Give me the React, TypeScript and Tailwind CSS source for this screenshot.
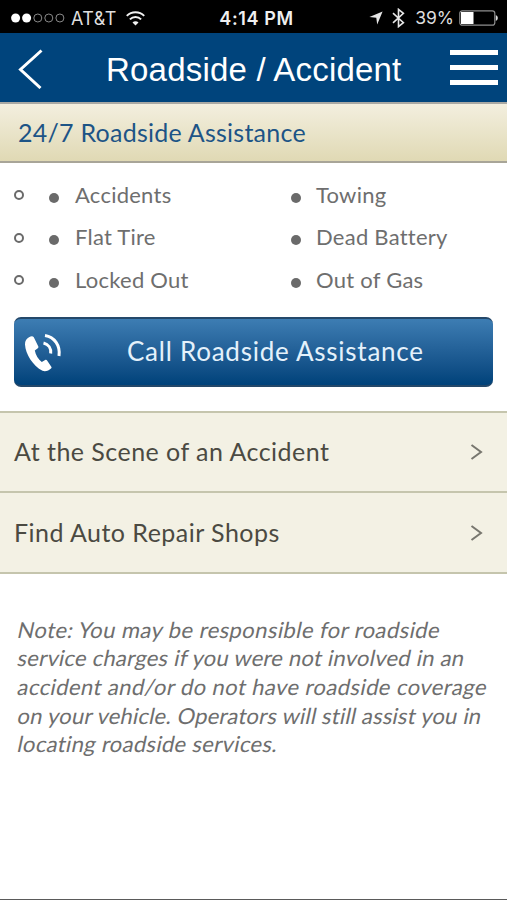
import { type FC } from "react";

const SERVICES = [
    ["Accidents", "Towing"],
    ["Flat Tire", "Dead Battery"],
    ["Locked Out", "Out of Gas"],
];

const LINKS = ["At the Scene of an Accident", "Find Auto Repair Shops"];

const NOTE = [
    { text: "Note: You may be responsible for roadside", className: "tracking-[0.42px]" },
    { text: "service charges if you were not involved in an", className: "tracking-[0.23px]" },
    { text: "accident and/or do not have roadside coverage", className: "tracking-[0.41px]" },
    { text: "on your vehicle. Operators will still assist you in", className: "tracking-[0.2px]" },
    { text: "locating roadside services.", className: "tracking-[0.32px]" },
];

const StatusBar: FC = () => (
    <div className="flex h-[33px] shrink-0 items-center bg-black pl-[11px] pr-[9px] pt-[3px] font-['Inter',sans-serif] text-white">
        <div className="flex flex-1 items-center">
            <svg width="54" height="10" viewBox="0 0 54 10">
                <circle cx="4.6" cy="5" r="4.5" fill="#fff" />
                <circle cx="15.6" cy="5" r="4.5" fill="#fff" />
                <circle cx="26.8" cy="5" r="4" fill="none" stroke="#8a8a8a" />
                <circle cx="37.8" cy="5" r="4" fill="none" stroke="#8a8a8a" />
                <circle cx="48.9" cy="5" r="4" fill="none" stroke="#8a8a8a" />
            </svg>
            <span className="ml-[6px] w-[46px] whitespace-nowrap text-[18px] tracking-[0.4px] text-[#dedede]">AT&amp;T</span>
            <svg className="ml-[9px]" width="19" height="15" viewBox="0 0 19 15" fill="none" stroke="#f2f2f2" strokeWidth="2">
                <path d="M0.8 4.9a12.3 12.3 0 0 1 17.4 0" />
                <path d="M3.9 8.4a7.9 7.9 0 0 1 11.2 0" />
                <path d="M9.5 14.6L6.5 11.4a4.2 4.2 0 0 1 6 0z" fill="#f2f2f2" stroke="none" />
            </svg>
        </div>
        <span className="whitespace-nowrap pl-[4px] text-[18px] font-semibold tracking-[0.6px] text-[#f0f0f0]">4:14 PM</span>
        <div className="flex flex-1 items-center justify-end">
            <svg width="14" height="14" viewBox="0 0 14 14" fill="#e6e6e6">
                <path d="M13.6 0.4L8.2 13.4 7.3 6.7 0.4 6z" />
            </svg>
            <svg className="ml-[9px]" width="13" height="20" viewBox="0 0 13 20" fill="none" stroke="#e6e6e6" strokeWidth="1.6">
                <path d="M1 5.2L11.4 14.6 6.5 18.6V1.4L11.4 5.4 1 14.8" />
            </svg>
            <span className="ml-[10px] whitespace-nowrap text-[17.5px] text-[#dedede]">39%</span>
            <svg className="ml-[5px]" width="39" height="16" viewBox="0 0 39 16">
                <rect x="0.8" y="0.8" width="35" height="14.4" rx="2.5" fill="none" stroke="#8f8f8f" strokeWidth="1.2" />
                <rect x="2" y="2" width="12.5" height="12" fill="#fff" />
                <path d="M36.8 5a3.2 3.2 0 0 1 0 6z" fill="#ddd" />
            </svg>
        </div>
    </div>
);

const Header: FC = () => (
    <div className="flex h-[69px] shrink-0 items-center bg-[#00447c] pl-[18px] pr-[9px] pt-[3px]">
        <svg width="25" height="40" viewBox="0 0 25 40" fill="none" stroke="#fff" strokeWidth="3">
            <path d="M23.5 1.5L2.5 20.5 22.5 39" />
        </svg>
        <h1 className="flex-1 whitespace-nowrap pl-[63px] pt-[2px] font-['Liberation_Sans',Arial,sans-serif] text-[33px] leading-[40px] tracking-[0.2px] text-white">Roadside / Accident</h1>
        <div className="mb-[3px] flex w-[48px] flex-col gap-[10px]">
            <span className="h-[5px] bg-white" />
            <span className="h-[5px] bg-white" />
            <span className="h-[5px] bg-white" />
        </div>
    </div>
);

const App: FC = () => {
    return (
        <div className="flex h-[900px] w-[507px] flex-col overflow-hidden bg-white font-['Lato',sans-serif]">
            <StatusBar />
            <Header />
            <div className="h-[61px] shrink-0 border-y-2 border-t-[#a9a9a4] border-b-[#a8a598] bg-linear-to-b from-[#f3efdf] to-[#e0d9b4] pl-[18px]">
                <h2 className="whitespace-nowrap text-[25px] leading-[56px] tracking-[0.25px] text-[#1d5486]">24/7 Roadside Assistance</h2>
            </div>
            <ul className="flex shrink-0 flex-col pt-[11px] text-[22px] tracking-[0.25px] text-[#6e6e6e]">
                {SERVICES.map(([left, right]) => (
                    <li key={left} className="flex h-[42.6px] items-center pl-[14px]">
                        <span className="size-[10px] rounded-full border-2 border-[#6a6a6a]" />
                        <span className="ml-[25px] mt-[5px] size-[10px] rounded-full bg-[#6a6a6a]" />
                        <span className="mb-[2px] ml-[16px] w-[216px] whitespace-nowrap">{left}</span>
                        <span className="mt-[5px] size-[10px] rounded-full bg-[#6a6a6a]" />
                        <span className="mb-[2px] ml-[15px] whitespace-nowrap">{right}</span>
                    </li>
                ))}
            </ul>
            <button className="mx-[14px] mt-[15px] flex h-[70px] shrink-0 items-center rounded-[7px] border-y-2 border-[#24486a] bg-linear-to-b from-[#3d7db3] to-[#00427a] pl-[10px]">
                <svg width="40" height="40" viewBox="0 0 40 40" fill="none" stroke="#fff">
                    <path d="M5 5.200C2.500 6.500.9 8.800 1 12.500c.5 9.500 8 21.500 17.500 26.300 3 1.200 6.500-.4 8.500-2.300.7-.6.700-1.200.3-1.800l-4.200-6.200c-.5-.8-1.300-.8-2-.4l-3.300 1.800c-3.500-2.500-6.200-7-7-11.400l3-2.200c.7-.6.8-1.200.4-2L9.800 5.200C8.800 3.700 7 4 5 5.200z" fill="#fff" stroke="none" />
                    <path d="M19.500 11c5 1.200 7.800 5.500 7.200 10.500" strokeWidth="3" />
                    <path d="M21 3.500c9.500 1.500 15.500 10 14 20.500" strokeWidth="3" />
                </svg>
                <span className="ml-[63px] whitespace-nowrap text-[26px] tracking-[0.75px] text-[#e4f1fb]">Call Roadside Assistance</span>
            </button>
            <div className="mt-[24px] shrink-0 border-t-2 border-[#c5c5ad]">
                {LINKS.map((link) => (
                    <a key={link} className="flex h-[80.5px] items-center justify-between border-b-2 border-[#c5c5ad] bg-[#f3f1e4] pl-[14px] pr-[24px]">
                        <span className="whitespace-nowrap text-[25px] tracking-[0.47px] text-[#4b4a42]">{link}</span>
                        <svg width="13" height="18" viewBox="0 0 13 18" fill="none" stroke="#77766e" strokeWidth="2">
                            <path d="M1.500 2L11 9 1.500 16" />
                        </svg>
                    </a>
                ))}
            </div>
            <p className="flex flex-col items-start pl-[18px] pt-[42px] text-[22px] leading-[28.6px] text-[#6e6e6e]">
                {NOTE.map(({ text, className }) => (
                    <span key={text} className={`-skew-x-12 whitespace-nowrap ${className}`}>{text}</span>
                ))}
            </p>
            <div className="mt-auto h-px shrink-0 bg-[#5a5a5a]" />
        </div>
    );
};

export default App;
